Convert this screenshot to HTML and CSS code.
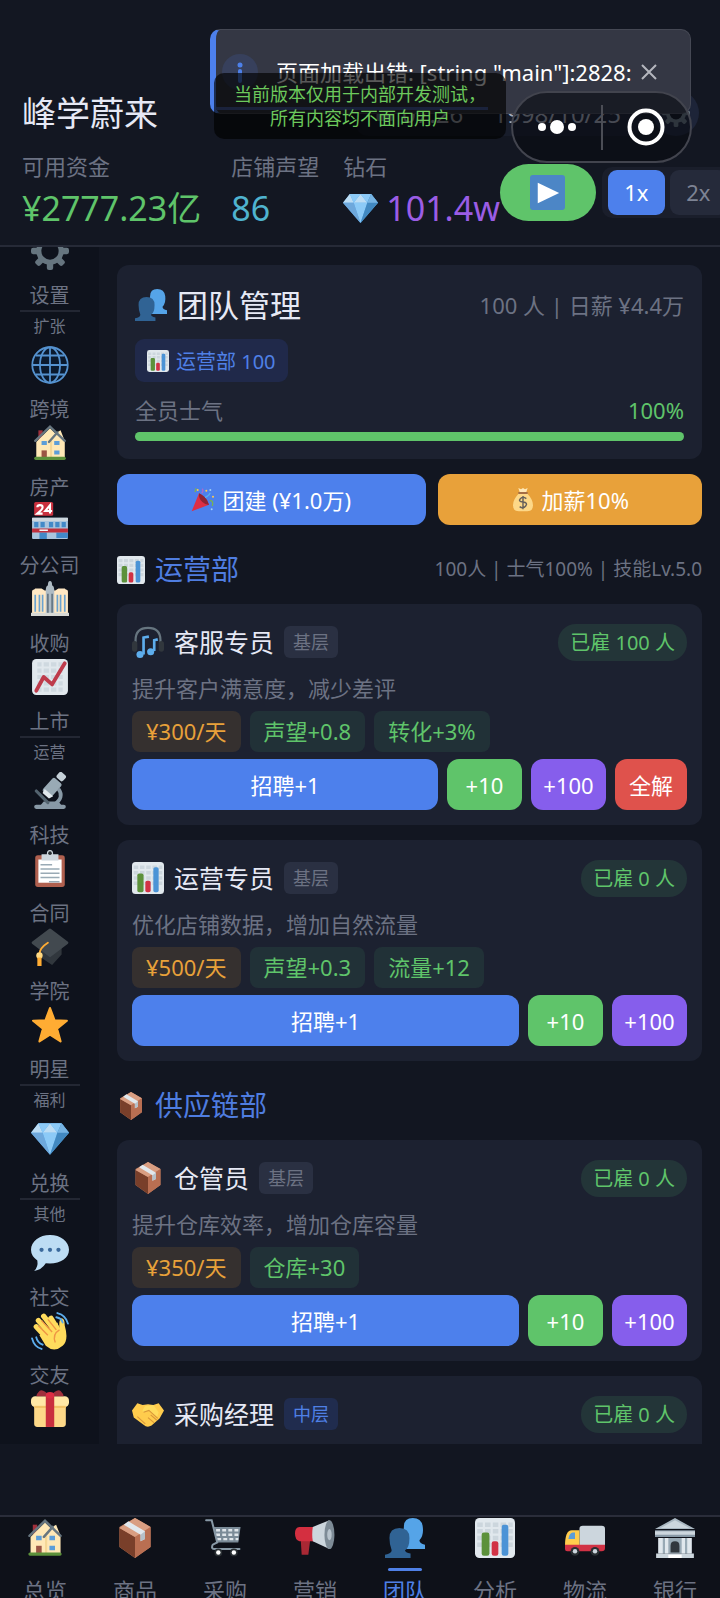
FILE: index.html
```html
<!DOCTYPE html>
<html lang="zh-CN">
<head>
    <meta charset="UTF-8">
    <meta name="viewport" content="width=device-width, initial-scale=1.0">
    <title>峰学蔚来</title>
    <link rel="stylesheet" href="styles.css">
</head>
<body>
    <svg class="sprite" aria-hidden="true">
        <symbol id="i-gear" viewBox="0 0 36 36">
            <g fill="#66757f"><rect x="15" y="0" width="6" height="36" rx="2"/><rect x="15" y="0" width="6" height="36" rx="2" transform="rotate(45 18 18)"/><rect x="15" y="0" width="6" height="36" rx="2" transform="rotate(90 18 18)"/><rect x="15" y="0" width="6" height="36" rx="2" transform="rotate(135 18 18)"/></g>
            <circle cx="18" cy="18" r="10.5" fill="none" stroke="#66757f" stroke-width="5"/>
            <circle cx="18" cy="18" r="8.2" fill="#0e121c"/>
        </symbol>
        <symbol id="i-globe" viewBox="0 0 36 36">
            <g fill="none" stroke="#5592cf" stroke-width="1.7"><circle cx="18" cy="18" r="16.8" fill="#0b1a2e"/><ellipse cx="18" cy="18" rx="9.5" ry="16.8"/><path d="M18 1v34M1 18h34M4.500 9h27M4.500 27h27"/></g>
        </symbol>
        <symbol id="i-house" viewBox="0 0 36 36">
            <path fill="#a0303c" d="M7 6h4v9H7z"/>
            <path fill="#ffe8b6" d="M5 17 18 4l5 5 5-3 4 10v16H5z"/>
            <path fill="#f5d796" d="M18 16h2v16h-2z"/>
            <path fill="none" stroke="#66757f" stroke-width="2.200" stroke-linecap="round" d="M4 16 18 2.500 32 16M17 17l8-9"/>
            <path fill="#5c9dd8" d="M10 16h5v4h-5zM22 16h5v4h-5zM22 25h5v4h-5z"/><path fill="#9b5544" d="M10 25h5v7h-5z"/>
            <rect x="3" y="31" width="30" height="3" rx="1.500" fill="#5c913b"/>
        </symbol>
        <symbol id="i-store" viewBox="0 0 36 36">
            <rect x="3" y="0" width="18" height="13" rx="1.500" fill="#c9303e"/>
            <g fill="none" stroke="#fff" stroke-width="2"><path d="M6 5q0-2 2.500-2T11 5q0 2-5 6h5M18 11V3l-4.500 5.500H20"/></g>
            <rect x="1" y="15" width="34" height="20" rx="1" fill="#a9c4dd"/><path fill="#ccd6dd" d="M1 15h34v3H1z"/>
            <path fill="#4289c8" d="M3 19h4v5H3zM9 19h4v5H9zM17 19h4v5h-4zM23 19h4v5h-4zM29 19h4v5h-4zM24 29h11v5H24zM8 29h7v6H8z"/>
            <path fill="#be2f3d" d="M1 25h34v4H1z"/><path fill="#f4f7f9" d="M8 26h8v1.500H8z"/>
        </symbol>
        <symbol id="i-hall" viewBox="0 0 36 36">
            <path fill="#ffe8c4" d="M1 11q0-2 2-2l1-1h6l3 2h10l3-2h6l1 1q2 0 2 2v23H1z"/><path fill="#aebbc4" d="M14 9q0-3 2-4 0-4 2-4t2 4q2 1 2 4v25h-8z"/><path fill="#d8d9d5" d="M0 31h36v3H0z"/>
            <g stroke="#6aa3d0" stroke-width="1.600"><path d="M4 14v16M8 14v16M11 14v16M25 14v16M28 14v16M32 14v16"/></g><path stroke="#61727f" stroke-width="1.500" d="M16 13v18M20 13v18"/>
        </symbol>
        <symbol id="i-up" viewBox="0 0 36 36">
            <rect x="1" y="1" width="34" height="34" rx="4" fill="#e1e8ed"/><g stroke="#cfd9e0" stroke-width="4"><path d="M6 6h4m2 0h5m2 0h5m2 0h4M6 12h4m2 0h5m2 0h5m2 0h4M6 18h4m2 0h5m2 0h5m2 0h4M6 24h4m2 0h5m2 0h5m2 0h4M6 30h4m2 0h5m2 0h5m2 0h4"/></g>
            <path fill="none" stroke="#be3b4b" stroke-width="3.600" stroke-linecap="round" stroke-linejoin="round" d="m5 31 7-13 8 7L32 5"/>
        </symbol>
        <symbol id="i-scope" viewBox="0 0 36 36">
            <path fill="none" stroke="#8899a6" stroke-width="3.500" d="M26 16q6 8-4 15"/><rect x="3" y="31" width="30" height="4" rx="2" fill="#8899a6"/><path fill="#8899a6" d="M12 28h14l4 5H8z"/>
            <path stroke="#53636f" stroke-width="3" stroke-linecap="round" d="m5 18 11 11"/>
            <rect x="15" y="6" width="11" height="17" rx="2" transform="rotate(42 20 14)" fill="#99aab5"/><path fill="#e1e8ed" d="m13 16 8 7-4 2-6-5z"/><rect x="25" y="1" width="8" height="7" rx="2" transform="rotate(42 29 4)" fill="#c5d0d8"/>
        </symbol>
        <symbol id="i-clip" viewBox="0 0 36 36">
            <rect x="4" y="5" width="28" height="30" rx="2.500" fill="#b0604f"/><path fill="#fff" d="M7 9h22v22H7z"/><path fill="#ccd6dd" d="M10 4h5q0-4 3-4t3 4h5v6H10z"/><circle cx="18" cy="3" r="1.700" fill="#292f33"/>
            <path stroke="#99aab5" stroke-width="1.500" d="M9 14h11M9 18h18M9 22h18M9 26h18M17 30h10"/>
        </symbol>
        <symbol id="i-cap" viewBox="0 0 36 36">
            <path fill="#31373d" d="M8 18 18 26 29 17v8l-9 10-12-8z"/><path fill="#42494f" d="M17 1q1-1 2 0l16 12q1 1 0 2L19 27q-1 1-2 0L1 15q-1-1 0-2z"/>
            <path fill="none" stroke="#ffac33" stroke-width="1.800" stroke-linecap="round" d="M16 14q-8 5-8 11"/><circle cx="8" cy="26" r="3" fill="#ffd983"/><path fill="#ffac33" d="M6 28h4v8H6z"/>
        </symbol>
        <symbol id="i-star" viewBox="0 0 36 36"><path fill="#ffac33" stroke="#ffac33" stroke-width="2" stroke-linejoin="round" d="m18 2 4.300 11.500L34 14l-9.300 7.500L28 33.500 18 27 8 33.500l3.300-12L2 14l11.700-.5z"/></symbol>
        <symbol id="i-gem" viewBox="0 0 36 36">
            <path fill="#5dadec" d="M0 12 7 3h22l7 9-18 21z"/><path fill="#bdddf4" d="M0 12 7 3l4 9zM18 3 11 12h14z"/><path fill="#8ccaf7" d="M7 3h11l-7 9zM11 12h14l-7 21zM18 3h11l-4 9z"/><path fill="#6ea8dc" d="m0 12 18 21-7-21z"/><path fill="#4289c1" d="M29 3l7 9-18 21 7-21z"/><path fill="#77b4e3" d="m29 3 7 9H25z"/>
        </symbol>
        <symbol id="i-chat" viewBox="0 0 36 36"><path fill="#bdddf4" d="M18 1c10 0 18 6 18 14S28 28 18 28l-4-.3Q10 34 3 35q4-4 3-10-6-4-6-10C0 7 8 1 18 1z"/><g fill="#3b6a9c"><circle cx="10" cy="15" r="2"/><circle cx="18" cy="15" r="2"/><circle cx="26" cy="15" r="2"/></g></symbol>
        <symbol id="i-wave" viewBox="0 0 36 36">
            <g stroke="#ffdc5d" stroke-width="5" stroke-linecap="round"><path d="M5 14l13 14M7 8l15 17M12 4l13 17M19 6l8 13"/></g><path fill="#ffdc5d" d="m8 22 17-12 2 6q-1-9 2-10 3 0 3 7 4 14-2 19-8 7-16 0z"/>
            <path fill="none" stroke="#ef9645" stroke-width="1.300" d="m7 13 9 9M10 8l10 11M16 7l8 10M27 17q-7 4-4 12"/>
            <g fill="none" stroke="#5dadec" stroke-width="1.800" stroke-linecap="round"><path d="M25 1q8 2 10 10M24 5q5 1 6 5M1 25q2 8 9 10M5 24q1 5 6 7"/></g>
        </symbol>
        <symbol id="i-gift" viewBox="0 0 36 36">
            <path fill="#fdd888" d="M3 12h30v20q0 3-3 3H6q-3 0-3-3z"/><rect x="0" y="6" width="36" height="10" rx="4" fill="#ffe8a6"/><path fill="#f2c368" d="M3 15h30v2H3z"/><path fill="#c92f3e" d="M14 5h8v30h-8z"/><path fill="#a0303c" d="M18 6Q11-2 8 1T5 6zM18 6q7-8 10-5t3 5z"/><ellipse cx="18" cy="5" rx="4" ry="3" fill="#dd2e44"/>
        </symbol>
        <symbol id="i-box" viewBox="0 0 36 36">
            <path fill="#c98566" d="m18 0 14 8v18L18 36 4 26V8z"/><path fill="#793f2a" d="m4 9 14 8v19L4 26z"/><path fill="#d99e82" d="m18 0 14 8-14 9L4 9z"/><path fill="#b96f52" d="m18 17 14-9v18L18 36z"/><path fill="#e1e8ed" d="m8 6 4-3 15 9v7l-4 2v-6z"/><path fill="#b6c1c9" d="m23 15 4-3v7l-4 2z"/>
        </symbol>
        <symbol id="i-cart" viewBox="0 0 36 36">
            <path fill="#7b8b98" d="M8 8h24l-2 14H11z"/><g stroke="#dfe5ea" stroke-width="2.200" stroke-dasharray="3.500 2"><path d="M10 11h21M10 15h20M11 19h19"/></g><path fill="none" stroke="#8899a6" stroke-width="1.800" stroke-linecap="round" d="M1 2h5l5 20-4 2q-2 4 2 4h22"/>
            <circle cx="12" cy="31" r="3.500" fill="#292f33"/><circle cx="12" cy="31" r="2" fill="#fff"/><circle cx="26" cy="31" r="3.500" fill="#292f33"/><circle cx="26" cy="31" r="2" fill="#fff"/>
        </symbol>
        <symbol id="i-horn" viewBox="0 0 36 36">
            <path fill="#a92834" d="M5 17h9l-2 16H6z"/><path fill="#d42f40" d="M4 8h14v13H4Q0 20 0 14t4-6z"/><path fill="#ccd6dd" d="M16 8 31 2v26l-15-7q-1-6 0-13z"/><ellipse cx="31" cy="15" rx="4.500" ry="13" fill="#7d8b96"/><ellipse cx="31" cy="15" rx="2" ry="5" fill="#b7c3cc"/>
        </symbol>
        <symbol id="i-people" viewBox="0 0 36 36">
            <path fill="#55a4e8" d="M17 8q0-8 8-8t9 8-3 12q0 3 5 4v4H15z"/><path fill="#306394" d="M4 18q0-9 9-9t9 9-4 11q0 2 5 3v4H0v-3q6-1 6-4-2-5-2-11z"/>
        </symbol>
        <symbol id="i-bars" viewBox="0 0 36 36">
            <rect width="36" height="36" rx="4" fill="#e1e8ed"/><g stroke="#ccd6dd" stroke-width="4"><path d="M2 6h5m2 0h5m2 0h5m2 0h5m2 0h4M2 12h5m2 0h5m2 0h5m2 0h5m2 0h4M2 18h5m2 0h5m2 0h5m2 0h5m2 0h4M2 24h5m2 0h5m2 0h5m2 0h5m2 0h4"/></g>
            <rect x="6" y="13" width="7" height="21" rx="2" fill="#5c913b"/><rect x="15" y="21" width="6" height="13" rx="2" fill="#d13245"/><rect x="24" y="6" width="6" height="28" rx="2" fill="#4b93d6"/>
        </symbol>
        <symbol id="i-truck" viewBox="0 0 36 36">
            <rect x="13" y="7" width="23" height="20" rx="3" fill="#ccd6dd"/><path fill="#ffcc4d" d="M0 25q0-14 6-14h7v16H0z"/><path fill="#5c9dd8" d="M3 19q1-6 4-6h2v6z"/><path fill="#d13245" d="M0 24h36v3q0 3-3 3H2q-2 0-2-2z"/><g fill="#292f33"><circle cx="9" cy="30" r="4"/><circle cx="27" cy="30" r="4"/></g><g fill="#ccd6dd"><circle cx="9" cy="30" r="2"/><circle cx="27" cy="30" r="2"/></g>
        </symbol>
        <symbol id="i-bank" viewBox="0 0 36 36">
            <path fill="#aab8c2" d="M18 0 36 10H0z"/><path fill="#ccd6dd" d="M18 2 31 9H5z"/><path fill="#8899a6" d="M0 11h36v6H0z"/><path fill="#ccd6dd" d="M0 12h36v3H0z"/><path fill="#99aab5" d="M3 18h30v14H3z"/><path fill="#e1e8ed" d="M3 18h4v14H3zM9 18h3v14H9zM24 18h3v14h-3zM29 18h4v14h-4z"/><path fill="#31373d" d="M14 31v-6q0-4 4-4t4 4v6z"/><path fill="#ccd6dd" d="M1 32h34v4H1z"/><path fill="#fff" d="M12 33h12v3H12z"/>
        </symbol>
        <symbol id="i-phones" viewBox="0 0 36 36">
            <path fill="none" stroke="#66757f" stroke-width="2.500" d="M4 20V16q0-14 14-14t14 14v4"/><rect x="0" y="17" width="6" height="12" rx="3" fill="#31373d"/><rect x="30" y="17" width="6" height="12" rx="3" fill="#31373d"/>
            <path fill="none" stroke="#5dadec" stroke-width="3" d="M13 32V13l6-1M25 28V16l4-1"/><circle cx="9" cy="32" r="4" fill="#5dadec"/><circle cx="21" cy="29" r="4" fill="#5dadec"/>
        </symbol>
        <symbol id="i-shake" viewBox="0 0 36 36">
            <path fill="#ffcc4d" d="m0 14 6-8 6 2 6-1 6 1 6-2 6 8-5 9-9 8q-5 3-9-1l-11-8z"/><path fill="#ffdc5d" d="m15 9 9-1 6 8-2 6-9-8-6 2q-3-1 2-7z"/><path fill="none" stroke="#d9973a" stroke-width="1.200" d="m13 16 6-2 10 9M6 21l9 8M18 22l7 6M21 19l7 6"/>
        </symbol>
        <symbol id="i-party" viewBox="0 0 36 36">
            <path fill="#dd2e44" d="M12 8q10 5 15 17L1 35z"/><path fill="#8e2434" d="M12 8q-1 8 5 13t10 4q-2-8-7-12t-8-5z"/><path fill="none" stroke="#a66ad0" stroke-width="2" d="M16 8q3-3 1-7"/><path fill="none" stroke="#77b255" stroke-width="2" d="M6 6q2-6 1-5M28 19q6-1 4 8"/><path fill="none" stroke="#55acee" stroke-width="2" d="M21 14q6-2 8-7"/><g fill="#ffcc4d"><circle cx="23" cy="4" r="1.500"/><circle cx="33" cy="13" r="1.500"/><circle cx="10" cy="3" r="1.500"/></g><g fill="#9fd0f5"><circle cx="29" cy="3" r="1.500"/><circle cx="31" cy="32" r="1.500"/></g>
        </symbol>
        <symbol id="i-money" viewBox="0 0 36 36">
            <path fill="#fdd888" d="M12 8h12q9 9 9 18t-9 9H12q-9 0-9-9t9-18z"/><path fill="#a56e45" d="M11 6h14v3H11z"/><path fill="#ffe8b6" d="m11 0 4 2 3-2 3 2 4-2-2 6H13z"/><path fill="none" stroke="#66605a" stroke-width="2.200" d="M23 16q-5-4-9 0t4 5 4 6-9 1M18 12v20"/>
        </symbol>
        <symbol id="i-play" viewBox="0 0 36 36"><rect width="36" height="36" rx="3" fill="#4c86c6"/><path fill="#fff" d="m8 8 22 10.500L8 29z"/></symbol>
        <symbol id="i-date" viewBox="0 0 36 36"><rect x="1" y="5" width="34" height="29" rx="4" fill="#66757f"/><path fill="#39414c" d="M5 13h26v3H5z"/></symbol>
    </svg>

    <header class="top">
        <div class="top-row">
            <h1>峰学蔚来</h1>
            <div class="date-box">
                <svg class="icon-18"><use href="#i-date"/></svg>
                <span class="time">07:26</span>
                <span>1998/10/25</span>
            </div>
            <button class="gear-btn" aria-label="设置"><svg class="icon-28"><use href="#i-gear"/></svg></button>
        </div>
        <div class="stats">
            <div class="stat money">
                <div class="stat-label">可用资金</div>
                <div class="stat-value green">¥2777.23亿</div>
            </div>
            <div class="stat">
                <div class="stat-label">店铺声望</div>
                <div class="stat-value cyan">86</div>
            </div>
            <div class="stat gem">
                <div class="stat-label">钻石</div>
                <div class="stat-value purple"><svg class="icon-35"><use href="#i-gem"/></svg>101.4w</div>
            </div>
            <button class="play" aria-label="播放"><svg class="icon-35"><use href="#i-play"/></svg></button>
            <div class="speeds">
                <button class="speed active">1x</button>
                <button class="speed">2x</button>
            </div>
        </div>
    </header>

    <div class="body">
        <nav class="side">
            <div class="side-list">
                <a class="side-item" href="#"><svg class="icon-38"><use href="#i-gear"/></svg>设置</a>
                <div class="side-title">扩张</div>
                <a class="side-item" href="#"><svg class="icon-38"><use href="#i-globe"/></svg>跨境</a>
                <a class="side-item" href="#"><svg class="icon-38"><use href="#i-house"/></svg>房产</a>
                <a class="side-item" href="#"><svg class="icon-38"><use href="#i-store"/></svg>分公司</a>
                <a class="side-item" href="#"><svg class="icon-38"><use href="#i-hall"/></svg>收购</a>
                <a class="side-item" href="#"><svg class="icon-38"><use href="#i-up"/></svg>上市</a>
                <div class="side-title">运营</div>
                <a class="side-item" href="#"><svg class="icon-38"><use href="#i-scope"/></svg>科技</a>
                <a class="side-item" href="#"><svg class="icon-38"><use href="#i-clip"/></svg>合同</a>
                <a class="side-item" href="#"><svg class="icon-38"><use href="#i-cap"/></svg>学院</a>
                <a class="side-item" href="#"><svg class="icon-38"><use href="#i-star"/></svg>明星</a>
                <div class="side-title">福利</div>
                <a class="side-item" href="#"><svg class="icon-38"><use href="#i-gem"/></svg>兑换</a>
                <div class="side-title">其他</div>
                <a class="side-item" href="#"><svg class="icon-38"><use href="#i-chat"/></svg>社交</a>
                <a class="side-item" href="#"><svg class="icon-38"><use href="#i-wave"/></svg>交友</a>
                <a class="side-item" href="#" aria-label="礼包"><svg class="icon-38"><use href="#i-gift"/></svg></a>
            </div>
        </nav>

        <main class="content">
            <section class="card summary">
                <div class="row">
                    <svg class="icon-32"><use href="#i-people"/></svg>
                    <h2>团队管理</h2>
                    <span class="right">100 人 | 日薪 ¥4.4万</span>
                </div>
                <div class="chip"><svg class="icon-22"><use href="#i-bars"/></svg>运营部 100</div>
                <div class="morale"><span>全员士气</span><span class="green">100%</span></div>
                <div class="bar"><div class="bar-fill" style="width: 100%"></div></div>
            </section>

            <div class="actions">
                <button class="btn blue"><svg class="icon-24"><use href="#i-party"/></svg>团建 (¥1.0万)</button>
                <button class="btn orange"><svg class="icon-24"><use href="#i-money"/></svg>加薪10%</button>
            </div>

            <div class="dept">
                <svg class="icon-28"><use href="#i-bars"/></svg>
                <h3>运营部</h3>
                <span class="right">100人 | 士气100% | 技能Lv.5.0</span>
            </div>

            <section class="card">
                <div class="job">
                    <svg class="icon-32"><use href="#i-phones"/></svg>
                    <h4>客服专员</h4>
                    <span class="level">基层</span>
                    <span class="hired">已雇 100 人</span>
                </div>
                <p>提升客户满意度，减少差评</p>
                <div class="tags"><span class="tag pay">¥300/天</span><span class="tag">声望+0.8</span><span class="tag">转化+3%</span></div>
                <div class="hire">
                    <button class="btn blue grow">招聘+1</button>
                    <button class="btn lime">+10</button>
                    <button class="btn violet">+100</button>
                    <button class="btn red">全解</button>
                </div>
            </section>

            <section class="card">
                <div class="job">
                    <svg class="icon-32"><use href="#i-bars"/></svg>
                    <h4>运营专员</h4>
                    <span class="level">基层</span>
                    <span class="hired">已雇 0 人</span>
                </div>
                <p>优化店铺数据，增加自然流量</p>
                <div class="tags"><span class="tag pay">¥500/天</span><span class="tag">声望+0.3</span><span class="tag">流量+12</span></div>
                <div class="hire">
                    <button class="btn blue grow">招聘+1</button>
                    <button class="btn lime">+10</button>
                    <button class="btn violet">+100</button>
                </div>
            </section>

            <div class="dept">
                <svg class="icon-28"><use href="#i-box"/></svg>
                <h3>供应链部</h3>
            </div>

            <section class="card">
                <div class="job">
                    <svg class="icon-32"><use href="#i-box"/></svg>
                    <h4>仓管员</h4>
                    <span class="level">基层</span>
                    <span class="hired">已雇 0 人</span>
                </div>
                <p>提升仓库效率，增加仓库容量</p>
                <div class="tags"><span class="tag pay">¥350/天</span><span class="tag">仓库+30</span></div>
                <div class="hire">
                    <button class="btn blue grow">招聘+1</button>
                    <button class="btn lime">+10</button>
                    <button class="btn violet">+100</button>
                </div>
            </section>

            <section class="card last">
                <div class="job">
                    <svg class="icon-32"><use href="#i-shake"/></svg>
                    <h4>采购经理</h4>
                    <span class="level mid">中层</span>
                    <span class="hired">已雇 0 人</span>
                </div>
            </section>
        </main>
    </div>

    <nav class="tabs">
        <a class="tab" href="#"><svg class="icon-40"><use href="#i-house"/></svg>总览</a>
        <a class="tab" href="#"><svg class="icon-40"><use href="#i-box"/></svg>商品</a>
        <a class="tab" href="#"><svg class="icon-40"><use href="#i-cart"/></svg>采购</a>
        <a class="tab" href="#"><svg class="icon-40"><use href="#i-horn"/></svg>营销</a>
        <a class="tab active" href="#"><svg class="icon-40"><use href="#i-people"/></svg>团队</a>
        <a class="tab" href="#"><svg class="icon-40"><use href="#i-bars"/></svg>分析</a>
        <a class="tab" href="#"><svg class="icon-40"><use href="#i-truck"/></svg>物流</a>
        <a class="tab" href="#"><svg class="icon-40"><use href="#i-bank"/></svg>银行</a>
    </nav>

    <!-- error toast -->
    <div class="toast">
        <svg class="toast-icon" viewBox="0 0 36 36"><circle cx="18" cy="18" r="18" fill="#37405c"/><circle cx="18" cy="11" r="2.500" fill="#4d80ea"/><path stroke="#4d80ea" stroke-width="4" stroke-linecap="round" d="M18 17v10"/></svg>
        <span>页面加载出错: [string "main"]:2828:</span>
        <button class="toast-close" aria-label="关闭"><svg viewBox="0 0 16 16"><path d="M1 1l14 14M15 1 1 15"/></svg></button>
        <div class="toast-time"></div>
    </div>

    <div class="notice">当前版本仅用于内部开发测试，<br>所有内容均不面向用户</div>

    <!-- mini program capsule -->
    <div class="capsule">
        <button aria-label="更多"><svg width="40" height="16" viewBox="0 0 40 16"><circle cx="5" cy="8" r="4"/><circle cx="20" cy="8" r="7"/><circle cx="35" cy="8" r="4"/></svg></button>
        <i></i>
        <button aria-label="退出"><svg width="38" height="38" viewBox="0 0 38 38"><circle class="ring" cx="19" cy="19" r="16.500"/><circle cx="19" cy="19" r="8"/></svg></button>
    </div>
</body>
</html>
```

FILE: styles.css
```css
*{
    box-sizing: border-box;
}
body{
    margin: 0;
    height: 100vh;
    overflow: hidden;
    position: relative;
    display: flex;
    flex-direction: column;
    background-color: #121621;
    color: #e6e9f5;
    font-family: "Noto Sans", "Noto Sans CJK SC", sans-serif;
    font-size: 22px;
}
h1, h2, h3, h4, p{
    margin: 0;
    font-weight: 400;
}
a{
    color: inherit;
    text-decoration: none;
}
button{
    border: 0;
    padding: 0;
    background: none;
    color: #fff;
    font-family: inherit;
    font-size: 22px;
    cursor: pointer;
}
svg{
    display: block;
    flex: none;
}
.sprite{
    position: absolute;
    width: 0;
    height: 0;
}
.icon-18{ width: 18px; height: 18px; }
.icon-22{ width: 22px; height: 22px; }
.icon-24{ width: 24px; height: 24px; }
.icon-28{ width: 28px; height: 28px; }
.icon-32{ width: 32px; height: 32px; }
.icon-35{ width: 35px; height: 35px; }
.icon-38{ width: 38px; height: 38px; }
.icon-40{ width: 40px; height: 40px; }
.green{ color: #5fc46a; }
.cyan{ color: #4fb3cf; }
.purple{ color: #9b5de5; }

/* header */
.top{
    flex: none;
    padding: 90px 0 11px 22px;
    border-bottom: 2px solid #262a37;
    background-color: #131722;
}
.top-row{
    display: flex;
    align-items: center;
    height: 46px;
    padding-right: 21px;
}
h1{
    font-size: 34px;
    line-height: 46px;
    margin-right: auto;
}
.date-box{
    display: flex;
    align-items: center;
    gap: 8px;
    height: 46px;
    padding: 0 20px;
    margin-right: 12px;
    border-radius: 12px;
    background-color: #181d2b;
    color: #a6aab6;
    font-size: 24px;
}
.time{
    margin-right: 22px;
}
.gear-btn{
    display: flex;
    align-items: center;
    justify-content: center;
    width: 46px;
    height: 46px;
    border-radius: 23px;
    background-color: #1d2438;
}
.stats{
    display: flex;
    align-items: center;
    margin-top: 14px;
}
.stat{
    flex: none;
    margin-right: 24px;
}
.stat.money{
    margin-right: 30px;
}
.stat.gem{
    margin-right: 0;
}
.stat-label{
    line-height: 32px;
    color: #6c7283;
}
.stat-value{
    display: flex;
    align-items: center;
    gap: 8px;
    height: 52px;
    font-size: 34px;
    line-height: 52px;
}
.play{
    flex: none;
    display: flex;
    align-items: center;
    justify-content: center;
    width: 96px;
    height: 57px;
    border-radius: 29px;
    background-color: #5fc46a;
}
.speeds{
    flex: none;
    display: flex;
    gap: 5px;
    margin-left: 6px;
    padding: 3px 6px;
    border-radius: 10px;
    background-color: #1a1e2b;
}
.speed{
    width: 57px;
    height: 45px;
    border-radius: 9px;
    background-color: #252a3a;
    color: #7d8394;
    font-size: 22px;
}
.speed.active{
    background-color: #4d80ec;
    color: #fff;
}

/* middle area */
.body{
    flex: 1;
    min-height: 0;
    display: flex;
    overflow: hidden;
    margin-bottom: 71px;
}
.side{
    flex: none;
    width: 99px;
    overflow: hidden;
    background-color: #0e121c;
}
.side-list{
    margin-top: -15px;
}
.side-item{
    display: flex;
    flex-direction: column;
    align-items: center;
    height: 78px;
    gap: 12px;
    color: #6c7283;
    font-size: 20px;
    line-height: 28px;
}
.side-title{
    width: 60px;
    height: 36px;
    margin: 0 auto;
    border-top: 2px solid #232733;
    color: #6c7283;
    font-size: 16px;
    line-height: 28px;
    text-align: center;
}
.content{
    flex: 1;
    min-width: 0;
    padding: 18px;
}
.card{
    margin-bottom: 15px;
    padding: 15px;
    border-radius: 12px;
    background-color: #1c2130;
}
.card.summary{
    padding: 18px;
}
.card.last{
    padding-bottom: 30px;
}
.row{
    display: flex;
    align-items: center;
    height: 44px;
    gap: 10px;
    line-height: 40px;
}
h2{
    font-size: 31px;
}
.right{
    margin-left: auto;
    color: #6c7283;
}
.chip{
    display: inline-flex;
    align-items: center;
    gap: 7px;
    height: 43px;
    margin-top: 12px;
    padding: 0 12px;
    border-radius: 9px;
    background-color: #20294a;
    color: #4f80e6;
    font-size: 20px;
}
.morale{
    display: flex;
    justify-content: space-between;
    margin-top: 6px;
    line-height: 44px;
    color: #6c7283;
}
.morale .green{
    color: #5fc46a;
}
.bar{
    height: 9px;
    border-radius: 5px;
    background-color: #252a3a;
}
.bar-fill{
    height: 9px;
    border-radius: 5px;
    background-color: #5fc46a;
}
.actions{
    display: grid;
    grid-template-columns: 7fr 6fr;
    gap: 12px;
}
.btn{
    display: flex;
    align-items: center;
    justify-content: center;
    gap: 7px;
    height: 51px;
    border-radius: 12px;
    line-height: 32px;
}
.blue{ background-color: #4d80ec; }
.orange{ background-color: #e8a13a; }
.lime{ background-color: #5fc46a; }
.violet{ background-color: #865eec; }
.red{ background-color: #df524c; }
.dept{
    display: flex;
    align-items: center;
    gap: 10px;
    margin: 15px 0;
    padding-top: 10px;
    line-height: 39px;
}
.dept .right{
    font-size: 19px;
}
h3{
    color: #4f7de0;
    font-size: 28px;
}
.job{
    display: flex;
    align-items: center;
    gap: 10px;
    height: 46px;
}
h4{
    font-size: 25px;
    line-height: 46px;
}
.level{
    padding: 0 9px;
    border-radius: 6px;
    background-color: #2a3042;
    color: #6c7283;
    font-size: 18px;
    line-height: 32px;
}
.level.mid{
    background-color: #202c4e;
    color: #4f80e6;
}
.hired{
    margin-left: auto;
    padding: 0 12px;
    border-radius: 18px;
    background-color: #233538;
    color: #5fc46a;
    font-size: 20px;
    line-height: 37px;
}
.card p{
    color: #6c7283;
    line-height: 46px;
}
.tags{
    display: flex;
    gap: 9px;
}
.tag{
    padding: 0 14px;
    border-radius: 8px;
    background-color: #213137;
    color: #5fc46a;
    line-height: 41px;
}
.tag.pay{
    background-color: #35302f;
    color: #e8a13a;
}
.hire{
    display: flex;
    gap: 9px;
    margin-top: 7px;
}
.hire .btn{
    width: 75px;
}
.hire .grow{
    flex: 1;
}
.hire .red{
    width: 72px;
}

/* bottom tabs */
.tabs{
    flex: none;
    display: flex;
    height: 83px;
    overflow: hidden;
    border-top: 2px solid #2a2d3a;
    background-color: #0e1119;
}
.tab{
    position: relative;
    flex: 1;
    display: flex;
    flex-direction: column;
    align-items: center;
    gap: 16px;
    padding-top: 1px;
    color: #6c7283;
    line-height: 32px;
}
.tab.active{
    color: #4f80e6;
}
.tab.active::after{
    content: "";
    position: absolute;
    top: 51px;
    width: 34px;
    height: 3px;
    border-radius: 2px;
    background-color: #4f80e6;
}

/* overlays */
.toast{
    position: absolute;
    top: 29px;
    left: 210px;
    right: 29px;
    height: 85px;
    display: flex;
    align-items: center;
    padding-left: 6px;
    border: 1px solid #454854;
    border-left: 6px solid #4d80ec;
    border-radius: 10px;
    background-color: #343744;
    color: #fff;
    line-height: 32px;
    white-space: nowrap;
}
.toast-icon{
    width: 36px;
    height: 36px;
    margin-right: 18px;
}
.toast-close{
    margin-left: 9px;
}
.toast-close svg{
    width: 16px;
    height: 16px;
    fill: none;
    stroke: #b4b6be;
    stroke-width: 2;
}
.toast-time{
    position: absolute;
    left: 0;
    bottom: 3px;
    width: 272px;
    height: 3px;
    background-color: #4a62a8;
}
.notice{
    position: absolute;
    top: 73px;
    left: 214px;
    padding: 9px 20px;
    border-radius: 10px;
    background-color: rgba(0, 0, 0, .65);
    color: #6cc95c;
    font-size: 18px;
    line-height: 24px;
    text-align: center;
}
.capsule{
    position: absolute;
    top: 91px;
    right: 28px;
    width: 181px;
    height: 72px;
    display: flex;
    align-items: center;
    border: 2px solid #42444e;
    border-radius: 36px;
    background-color: rgba(8, 10, 16, .6);
}
.capsule button{
    flex: 1;
    display: flex;
    justify-content: center;
}
.capsule svg{
    fill: #fff;
}
.capsule .ring{
    fill: none;
    stroke: #fff;
    stroke-width: 4;
}
.capsule i{
    width: 2px;
    height: 45px;
    background-color: #4b4d55;
}
```
